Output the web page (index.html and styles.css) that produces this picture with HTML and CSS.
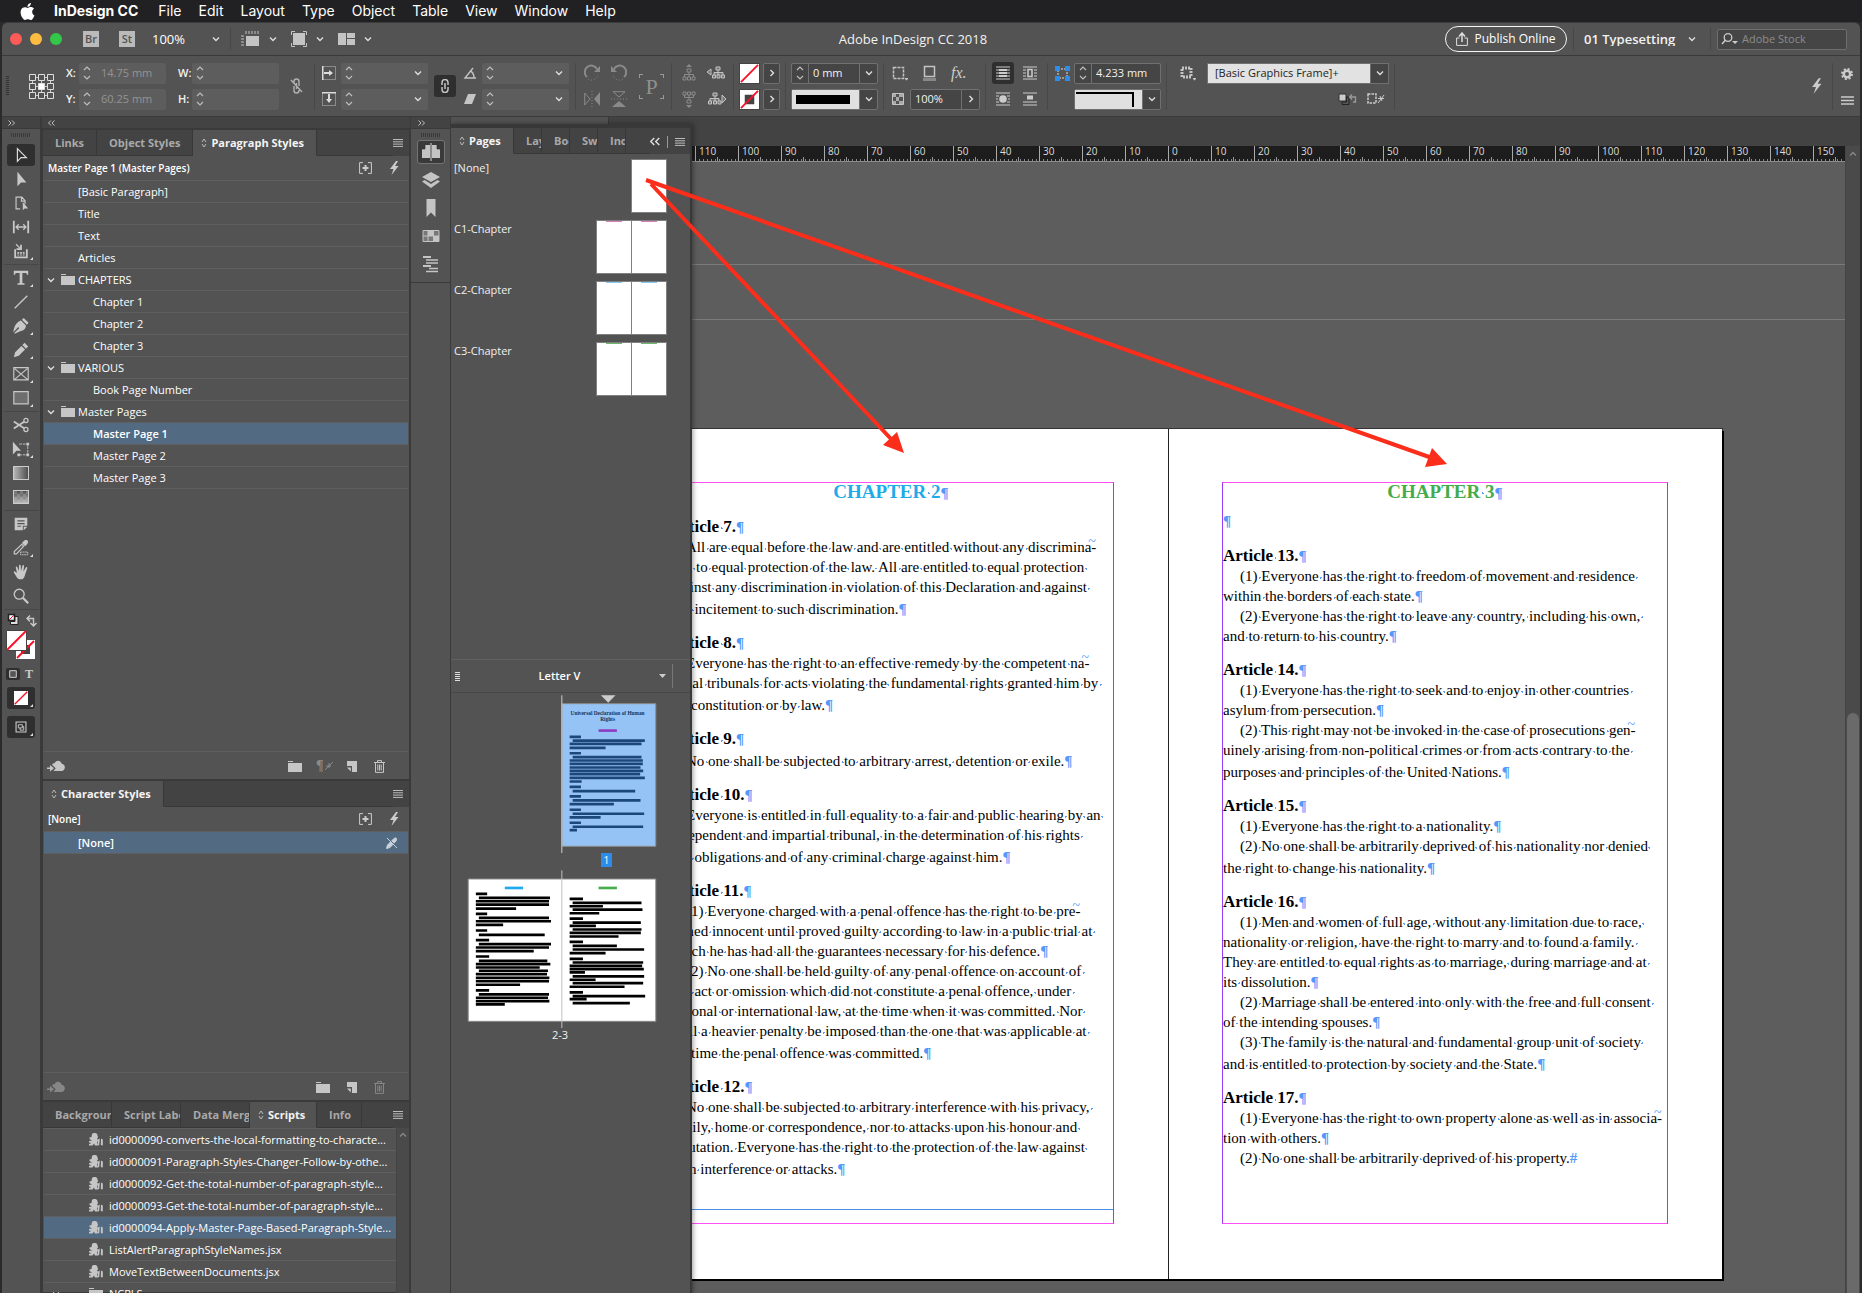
FILE: index.html
```html
<!DOCTYPE html>
<html lang="en">
<head>
<meta charset="utf-8">
<title>Adobe InDesign CC 2018</title>
<link rel="stylesheet" href="styles.css">
</head>
<body>
<svg class="sprite" aria-hidden="true">
  <symbol id="chev" viewBox="0 0 8 8"><path d="M1 2.5l3 3 3-3" fill="none" stroke="currentColor" stroke-width="1.4"/></symbol>
  <symbol id="chev-r" viewBox="0 0 8 8"><path d="M2.5 1l3 3-3 3" fill="none" stroke="currentColor" stroke-width="1.4"/></symbol>
  <symbol id="step" viewBox="0 0 8 16"><path d="M1 5l3-3 3 3M1 11l3 3 3-3" fill="none" stroke="currentColor" stroke-width="1.2"/></symbol>
  <symbol id="updown" viewBox="0 0 6 10"><path d="M1 4l2-3 2 3M1 6l2 3 2-3" fill="none" stroke="currentColor"/></symbol>
  <symbol id="burger" viewBox="0 0 10 8"><path d="M0 .5h10M0 2.8h10M0 5.1h10M0 7.4h10" stroke="currentColor"/></symbol>
  <symbol id="dbl-r" viewBox="0 0 7 6"><path d="M.5 .5L3 3 .5 5.500M4 .5L6.500 3 4 5.500" fill="none" stroke="currentColor"/></symbol>
  <symbol id="dbl-l" viewBox="0 0 7 6"><path d="M3 .5L.5 3 3 5.500M6.500 .5L4 3l2.500 2.500" fill="none" stroke="currentColor"/></symbol>
  <symbol id="grip" viewBox="0 0 20 4"><path d="M.5 0v4M2.500 0v4M4.500 0v4M6.500 0v4M8.500 0v4M10.500 0v4M12.500 0v4M14.500 0v4M16.500 0v4M18.500 0v4" stroke="#3a3a3a"/></symbol>
  <symbol id="folder" viewBox="0 0 14 11"><path d="M0 0h5v1H0zM0 2h14v9H0z" fill="currentColor"/></symbol>
  <symbol id="newitem" viewBox="0 0 10 11"><path d="M0 0h10v11H5V5H0z M0 6.500h3.800V10.500z" fill="currentColor"/></symbol>
  <symbol id="trash" viewBox="0 0 11 13"><path d="M0 2.500h11M3.500 2V.6h4V2M1.500 3v9.400h8V3M3.800 4.500v6M5.500 4.500v6M7.200 4.500v6" fill="none" stroke="currentColor"/></symbol>
  <symbol id="cloud" viewBox="0 0 18 12"><path d="M6.500 11l2.200-2.700L5 4.800C5.500 3.300 7 3 7.600 3.200 8.500 0 13.500-.5 14.700 3.700c4 .3 4.300 6.300.3 7.300z" fill="currentColor"/><path d="M0 7.500h3V5l4 3.300L3 11.600V9H0z" fill="currentColor"/></symbol>
  <symbol id="plusbox" viewBox="0 0 13 12"><path d="M4 .6H.6v10.800H4M9 .6h3.400v10.800H9" fill="none" stroke="currentColor"/><path d="M6.500 3v6M3.500 6h6" stroke="currentColor" stroke-width="2"/></symbol>
  <symbol id="bolt" viewBox="0 0 10 14"><path d="M7 0L1 8h3.500L2.500 14 9.500 5H6L9 0z" fill="currentColor"/></symbol>
  <symbol id="script" viewBox="0 0 14 13"><path d="M3 1c2-2 6-1 5.500 2 1 1 .5 2-.5 2.500 1.500 1 1 3 0 4l1 3H6l-1-2-1.500 2H0V11l2.500-1L0 9.500V8l3-.5L.5 6V4.500L2.500 4z" fill="currentColor"/><path d="M9 6.500l1.800-1-.6 6.500-1.500.5zM12 5.500l1.800 1v6l-2-.5z" fill="currentColor"/></symbol>
  <symbol id="none" viewBox="0 0 20 20"><path d="M0 0h20v20H0z" fill="#fff"/><path d="M1 19L19 1" stroke="#f5132a" stroke-width="2"/></symbol>
  <symbol id="tree" viewBox="0 0 14 18"><path d="M5 5h4v3H5zM1 13h3v3H1zM5.500 13h3v3h-3zM10 13h3v3h-3zM7 8v5M2.500 13v-2.500h9V13" fill="none" stroke="currentColor"/><path d="M4 3l3-3 3 3z" fill="currentColor"/></symbol>
  <symbol id="corner" viewBox="0 0 3 3"><path d="M3 0v3H0z" fill="#ddd"/></symbol>
</svg>

<nav class="menubar" aria-label="Menu bar">
  <svg class="apple" viewBox="0 0 24 24"><path fill="#fff" d="M12.152 6.896c-.948 0-2.415-1.078-3.960-1.040-2.040.027-3.910 1.183-4.961 3.014-2.117 3.675-.546 9.103 1.519 12.090 1.013 1.454 2.208 3.090 3.792 3.039 1.520-.065 2.090-.987 3.935-.987 1.831 0 2.350.987 3.960.948 1.637-.026 2.676-1.480 3.676-2.948 1.156-1.688 1.636-3.325 1.662-3.415-.039-.013-3.182-1.221-3.220-4.857-.026-3.040 2.480-4.494 2.597-4.559-1.429-2.090-3.623-2.324-4.390-2.376-2-.156-3.675 1.090-4.610 1.090zM15.530 3.830c.843-1.012 1.400-2.427 1.245-3.830-1.207.052-2.662.805-3.532 1.818-.780.896-1.454 2.338-1.273 3.714 1.338.104 2.715-.688 3.559-1.701"/></svg>
  <button class="appname">InDesign CC</button><button>File</button><button>Edit</button><button>Layout</button><button>Type</button><button>Object</button><button>Table</button><button>View</button><button>Window</button><button>Help</button>
</nav>

<div class="app">
  <header class="appbar">
    <div class="lights"><i class="red"></i><i class="amber"></i><i class="go"></i></div>
    <button class="chip">Br</button><button class="chip">St</button>
    <label class="pick zoom"><select aria-label="Zoom level"><option>100%</option></select><svg class="c8"><use href="#chev"/></svg></label>
    <i class="vline"></i>
    <button class="tool2" aria-label="View options"><svg width="19" height="16" viewBox="0 0 19 16"><path d="M5 0v3M8 0v3M11 0v3M14 0v3M17 0v3M0 5h3M0 8h3M0 11h3M0 14h3" stroke="#c4c4c4"/><path d="M5 5h13v10H5z" fill="#c4c4c4"/></svg><svg class="c8"><use href="#chev"/></svg></button>
    <button class="tool2" aria-label="Screen mode"><svg width="16" height="16" viewBox="0 0 16 16"><path d="M2 2h12v12H2z" fill="#c4c4c4"/><path d="M.5 4V.5H4M12 .5h3.500V4M.5 12v3.500H4M12 15.500h3.500V12" fill="none" stroke="#c4c4c4"/></svg><svg class="c8"><use href="#chev"/></svg></button>
    <button class="tool2" aria-label="Arrange documents"><svg width="17" height="12" viewBox="0 0 17 12"><path d="M0 0h8v12H0zM9 0h8v5H9zM9 6h8v6H9z" fill="#c4c4c4"/></svg><svg class="c8"><use href="#chev"/></svg></button>
    <h1>Adobe InDesign CC 2018</h1>
    <button class="publish"><svg width="12" height="14" viewBox="0 0 12 14"><path d="M3.500 6H.6v7.400h10.800V6H8.500" fill="none" stroke="#ddd"/><path d="M6 10V2M3 4.500l3-3.500 3 3.500" fill="none" stroke="#ddd" stroke-width="1.500"/></svg>Publish Online</button>
    <i class="vline"></i>
    <label class="pick space"><select aria-label="Workspace"><option>01 Typesetting</option></select><svg class="c8"><use href="#chev"/></svg></label>
    <i class="vline"></i>
    <label class="search"><svg width="17" height="12" viewBox="0 0 17 12"><circle cx="7" cy="4.500" r="3.800" fill="none" stroke="#ccc" stroke-width="1.300"/><path d="M4.500 7L1 11" stroke="#ccc" stroke-width="1.500"/><path d="M11 8h6l-3 3z" fill="#ccc"/></svg><input type="search" placeholder="Adobe Stock" aria-label="Adobe Stock"></label>
  </header>

  <section class="control" aria-label="Control">
    <svg class="vgrip" width="3" height="20" viewBox="0 0 3 20"><path d="M0 .5h3M0 2.500h3M0 4.500h3M0 6.500h3M0 8.500h3M0 10.500h3M0 12.500h3M0 14.500h3M0 16.500h3M0 18.500h3" stroke="#333"/></svg>
    <svg class="refpt" width="25" height="25" viewBox="0 0 25 25"><path d="M3.500 3.500h18v18h-18zM3.500 12.500h18M12.500 3.500v18" fill="none" stroke="#ccc"/><g fill="#535353" stroke="#ddd"><path d="M.5.5h6v6h-6zM9.500.5h6v6h-6zM18.500.5h6v6h-6zM.5 9.500h6v6h-6zM18.500 9.500h6v6h-6zM.5 18.500h6v6h-6zM9.500 18.500h6v6h-6zM18.500 18.500h6v6h-6z"/><path d="M9.500 9.500h6v6h-6z" fill="#fff"/></g></svg>
    <div class="coords">
      <label for="fx">X:</label><span class="field off"><svg class="st"><use href="#step"/></svg><input id="fx" value="14.75 mm"></span>
      <label for="fw">W:</label><span class="field off"><svg class="st"><use href="#step"/></svg><input id="fw"></span>
      <label for="fy">Y:</label><span class="field off"><svg class="st"><use href="#step"/></svg><input id="fy" value="60.25 mm"></span>
      <label for="fh">H:</label><span class="field off"><svg class="st"><use href="#step"/></svg><input id="fh"></span>
    </div>
    <svg class="unlink" width="13" height="16" viewBox="0 0 13 16"><path d="M4 6V3.500a2.500 2.500 0 0 1 5 0V8M4 8v4.500a2.500 2.500 0 0 0 5 0V10M6.500 5v6M1 2l11 12" fill="none" stroke="#b0b0b0" stroke-width="1.400"/></svg>
    <i class="sep"></i>
    <div class="scale">
      <svg width="14" height="14" viewBox="0 0 14 14"><path d="M.5.5h13v13H.5z" fill="none" stroke="#c4c4c4" stroke-dasharray="1 1"/><path d="M.5 0v14M2 7h6" stroke="#ddd" stroke-width="2"/><path d="M7 4l4 3-4 3z" fill="#ddd"/></svg>
      <label class="field off"><svg class="st"><use href="#step"/></svg><input aria-label="Scale X"><svg class="c8"><use href="#chev"/></svg></label>
      <svg width="14" height="14" viewBox="0 0 14 14"><path d="M.5.5h13v13H.5z" fill="none" stroke="#c4c4c4" stroke-dasharray="1 1"/><path d="M0 .5h14M7 2v6" stroke="#ddd" stroke-width="2"/><path d="M4 7l3 4 3-4z" fill="#ddd"/></svg>
      <label class="field off"><svg class="st"><use href="#step"/></svg><input aria-label="Scale Y"><svg class="c8"><use href="#chev"/></svg></label>
    </div>
    <button class="linkbtn" aria-label="Constrain proportions"><svg width="8" height="14" viewBox="0 0 8 14"><path d="M1 6V3.500a3 3 0 0 1 6 0V6M1 8v2.500a3 3 0 0 0 6 0V8M4 4v6" fill="none" stroke="#c4c4c4" stroke-width="1.500"/></svg></button>
    <div class="scale">
      <svg width="14" height="12" viewBox="0 0 14 12"><path d="M10 1L2 11h11M7 4c3 1 4 3 4 7" fill="none" stroke="#c4c4c4" stroke-width="1.400"/></svg>
      <label class="field off"><svg class="st"><use href="#step"/></svg><input aria-label="Rotation"><svg class="c8"><use href="#chev"/></svg></label>
      <svg width="14" height="10" viewBox="0 0 14 10"><path d="M5 0h8L9 10H1z" fill="#c4c4c4"/></svg>
      <label class="field off"><svg class="st"><use href="#step"/></svg><input aria-label="Shear"><svg class="c8"><use href="#chev"/></svg></label>
    </div>
    <i class="sep"></i>
    <div class="icons rot">
      <svg viewBox="0 0 16 16"><path d="M3 12A6.500 6.500 0 1 1 13 4" fill="none" stroke="#8a8a8a" stroke-width="2"/><path d="M16 1v6h-6z" fill="#8a8a8a"/><path d="M4 14a6.500 6.500 0 0 0 10-4" fill="none" stroke="#8a8a8a" stroke-dasharray="1 2"/></svg>
      <svg viewBox="0 0 16 16"><path d="M13 12A6.500 6.500 0 1 0 3 4" fill="none" stroke="#8a8a8a" stroke-width="2"/><path d="M0 1v6h6z" fill="#8a8a8a"/><path d="M12 14a6.500 6.500 0 0 1-10-4" fill="none" stroke="#8a8a8a" stroke-dasharray="1 2"/></svg>
      <svg viewBox="0 0 16 16"><path d="M.7 2v12L6 8z" fill="none" stroke="#8a8a8a"/><path d="M16 1v14l-6-7z" fill="#8a8a8a"/><path d="M8 0v16" stroke="#8a8a8a" stroke-dasharray="1 2"/></svg>
      <svg viewBox="0 0 16 16"><path d="M2 .7h12L8 6z" fill="none" stroke="#8a8a8a"/><path d="M1 16h14l-7-6z" fill="#8a8a8a"/><path d="M0 8h16" stroke="#8a8a8a" stroke-dasharray="1 2"/></svg>
    </div>
    <div class="bigp">P</div>
    <i class="sep"></i>
    <div class="icons hier">
      <svg class="dim"><use href="#tree"/></svg><svg viewBox="0 0 19 18"><path d="M0 8l4-3v6zM9 3h4v3H9zM5.500 11h3v3h-3zM10 11h3v3h-3zM14.500 11h3v3h-3zM11 6v5M7 11V8.500h9V11" fill="#c4c4c4" stroke="#c4c4c4" fill-opacity=".3"/></svg>
      <svg class="dim flip"><use href="#tree"/></svg><svg viewBox="0 0 19 18"><path d="M19 9l-4-4v8zM6 3h4v3H6zM1.500 11h3v3h-3zM6.500 11h3v3h-3zM11 11h3v3h-3zM8 6v5M3 11V8.500h9V11" fill="#c4c4c4" stroke="#c4c4c4" fill-opacity=".3"/></svg>
    </div>
    <i class="sep"></i>
    <div class="fills">
      <svg class="sw"><use href="#none"/></svg><button class="box" aria-label="Fill options"><svg class="c8"><use href="#chev-r"/></svg></button>
      <svg class="sw" viewBox="0 0 20 20"><path d="M0 0h20v20H0z" fill="#fff"/><path d="M5 5h10v10H5z" fill="#444"/><path d="M1 19L19 1" stroke="#f5132a" stroke-width="2"/></svg><button class="box" aria-label="Stroke options"><svg class="c8"><use href="#chev-r"/></svg></button>
    </div>
    <i class="sep"></i>
    <div class="stack">
      <span class="field on"><svg class="st"><use href="#step"/></svg><input class="bl" value="0 mm" aria-label="Stroke weight"><button class="dd" aria-label="Stroke weights"><svg class="c8"><use href="#chev"/></svg></button></span>
      <span class="field on"><i class="stroke"></i><button class="dd" aria-label="Stroke types"><svg class="c8"><use href="#chev"/></svg></button></span>
    </div>
    <i class="sep"></i>
    <div class="stack effects">
      <div class="row3">
        <svg width="16" height="15" viewBox="0 0 16 15"><path d="M1.500 1.500h10v11h-10z" fill="none" stroke="#c4c4c4" stroke-width="1.500" stroke-dasharray="3 1"/><path d="M13 12h3v1l-1.500 1.500L13 13z" fill="#c4c4c4"/></svg>
        <svg width="15" height="17" viewBox="0 0 15 17"><path d="M2.500 1.500h10v10h-10z" fill="none" stroke="#c4c4c4" stroke-width="1.500"/><path d="M1 13h13v3H1z" fill="#888"/></svg>
        <span class="fx">fx.</span>
      </div>
      <div class="row2">
        <svg width="12" height="12" viewBox="0 0 12 12"><path d="M.5.5h11v11H.5z" fill="none" stroke="#c4c4c4"/><path d="M1 1h3v3H1zM7 1h4v3H7zM4 4h3v4H4zM1 8h3v3H1zM7 8h4v3H7z" fill="#aaa"/></svg>
        <span class="field on"><input value="100%" aria-label="Opacity"><button class="dd" aria-label="Opacity slider"><svg class="c8"><use href="#chev-r"/></svg></button></span>
      </div>
    </div>
    <i class="sep"></i>
    <div class="wraps">
      <button class="active" aria-label="No text wrap"><svg viewBox="0 0 14 14"><path d="M0 1h14M0 4h14M0 7h14M0 10h14M0 13h14" stroke="#ccc"/><path d="M3 3h8v8H3z" fill="#ccc"/><path d="M3 5.500h8M3 8.500h8" stroke="#333"/></svg></button>
      <button aria-label="Wrap around bounding box"><svg viewBox="0 0 14 14"><path d="M0 1h14M0 4h3M11 4h3M0 7h3M11 7h3M0 10h3M11 10h3M0 13h14" stroke="#ccc"/><path d="M5 3.500h4v7H5z" fill="none" stroke="#ccc" stroke-width="1.500"/></svg></button>
      <button aria-label="Wrap around object shape"><svg viewBox="0 0 14 14"><path d="M0 1h14M0 4h3M11 4h3M0 7h2M12 7h2M0 10h3M11 10h3M0 13h14" stroke="#ccc"/><circle cx="7" cy="7" r="3.800" fill="#ccc"/></svg></button>
      <button aria-label="Jump object"><svg viewBox="0 0 14 14"><path d="M0 1h14M0 10h14M0 13h14" stroke="#ccc"/><path d="M4 3.500h6v4H4z" fill="#ccc"/></svg></button>
    </div>
    <i class="sep"></i>
    <div class="scale corners">
      <svg width="15" height="15" viewBox="0 0 15 15"><path d="M3 3h9v9H3z" fill="none" stroke="#999" stroke-dasharray="2 1" stroke-width="2"/><path d="M0 0h5v5H0zM10 0h5v5h-5zM0 10h5v5H0zM10 10h5v5h-5z" fill="#2e8ceb"/></svg>
      <span class="field on"><svg class="st"><use href="#step"/></svg><input class="bl" value="4.233 mm" aria-label="Corner size"></span>
      <i></i>
      <span class="field on"><i class="cshape"></i><button class="dd" aria-label="Corner shape"><svg class="c8"><use href="#chev"/></svg></button></span>
    </div>
    <i class="sep"></i>
    <div class="objstyle">
      <svg width="16" height="15" viewBox="0 0 16 15"><path d="M2 2h9v9H2z" fill="none" stroke="#c4c4c4" stroke-width="3" stroke-dasharray="2 1"/><path d="M13 12h3v1l-1.500 1.500L13 13z" fill="#c4c4c4"/></svg>
      <label class="pick light"><select aria-label="Object style"><option>[Basic Graphics Frame]+</option></select><b class="dd"><svg class="c8"><use href="#chev"/></svg></b></label>
      <i></i>
      <span class="mini">
        <svg width="20" height="12" viewBox="0 0 20 12"><path d="M1 1h7v7H1z" fill="#ccc" stroke="#333"/><path d="M8.500 4v5H4v2.500h7V4z" fill="#555" stroke="#222"/><path d="M12 4h5.500v5H15M14 1.500L11.500 4 14 6.500" fill="none" stroke="#999" stroke-width="1.300"/></svg>
        <svg width="18" height="12" viewBox="0 0 18 12"><path d="M1 1h8v9H1z" fill="none" stroke="#ccc" stroke-width="1.500" stroke-dasharray="2.500 1"/><path d="M11 10l6-8M11 5.500h6M13 3l2 5" stroke="#ccc"/></svg>
      </span>
    </div>
    <i class="sep"></i>
    <span class="grow"></span>
    <svg class="bolt" width="11" height="16"><use href="#bolt"/></svg>
    <i class="sep"></i>
    <div class="stack far">
      <svg width="12" height="12" viewBox="0 0 12 12"><circle cx="6" cy="6" r="3.200" fill="none" stroke="#ccc" stroke-width="2.500"/><circle cx="6" cy="6" r="5" fill="none" stroke="#ccc" stroke-width="2" stroke-dasharray="2 1.930"/></svg>
      <svg width="13" height="9" viewBox="0 0 13 9"><path d="M0 1h13M0 4.500h13M0 8h13" stroke="#ccc" stroke-width="1.300"/></svg>
    </div>
  </section>

  <main class="work">
    <aside class="toolcol">
      <div class="strip"><svg class="dbl"><use href="#dbl-r"/></svg></div>
      <div class="tools">
        <svg class="grip"><use href="#grip"/></svg>
        <button class="on" aria-label="Selection"><svg viewBox="0 0 20 20"><path d="M6 3v14l4-4h6z" fill="none" stroke="#ddd" stroke-width="1.300"/></svg></button>
        <button aria-label="Direct Selection"><svg viewBox="0 0 20 20"><path d="M6 2v16l4-4h6z" fill="#c8c8c8"/></svg></button>
        <button aria-label="Page"><svg viewBox="0 0 20 20"><path d="M9 16.500H4.500v-13H11l3.500 4V11M10.500 4v4h4" fill="none" stroke="#c8c8c8" stroke-width="1.300"/><path d="M12 9v9l2-2h4z" fill="#c8c8c8"/></svg></button>
        <button aria-label="Gap"><svg viewBox="0 0 20 20"><path d="M2 3v14M18 3v14" stroke="#c8c8c8" stroke-width="2"/><path d="M5 10h10M7.500 7l-3 3 3 3M12.500 7l3 3-3 3" fill="none" stroke="#c8c8c8" stroke-width="1.400"/></svg></button>
        <button aria-label="Content Collector"><svg viewBox="0 0 20 20"><path d="M3.500 8v9h13V8" fill="none" stroke="#c8c8c8" stroke-width="2"/><path d="M6 11h2v2H6zM9 11h2v2H9zM12 11h2v2h-2zM6 14h2v1H6zM9 14h2v1H9zM12 14h2v1h-2zM5 2l4 4V3h2v6H5V7h3L4 3z" fill="#c8c8c8"/></svg><svg class="cn"><use href="#corner"/></svg></button>
        <hr>
        <button aria-label="Type"><svg viewBox="0 0 20 20"><path d="M2 2h16v4.500h-1.500L16 4.500h-4.500v11l2.500.5v1.500H6V16l2.500-.5v-11H4l-.5 2H2z" fill="#c8c8c8"/></svg><svg class="cn"><use href="#corner"/></svg></button>
        <button aria-label="Line"><svg viewBox="0 0 20 20"><path d="M3 17L17 3" stroke="#c8c8c8" stroke-width="1.500"/></svg></button>
        <button aria-label="Pen"><svg viewBox="0 0 20 20"><path d="M13 1l5.500 5.500-2 2L11 3zM10 4l5.500 5.500c0 4-3 6-7 6.500L3 18.500l-.5-.8L8 12.500 7 11l-5.500 6C2 12 4 6 10 4z" fill="#c8c8c8"/></svg><svg class="cn"><use href="#corner"/></svg></button>
        <button aria-label="Pencil"><svg viewBox="0 0 20 20"><path d="M14 2l4 4-2.500 2.500-4-4zM10.500 5.500l4 4-7 7L2 18l1.500-5.500z" fill="#c8c8c8"/></svg><svg class="cn"><use href="#corner"/></svg></button>
        <button aria-label="Rectangle Frame"><svg viewBox="0 0 20 20"><path d="M2 3h16v13.500H2zM3 4l14 12M17 4L3 16" fill="none" stroke="#c8c8c8" stroke-width="1.300"/></svg><svg class="cn"><use href="#corner"/></svg></button>
        <button aria-label="Rectangle"><svg viewBox="0 0 20 20"><path d="M2 3h16v13.500H2z" fill="#6e6e6e" stroke="#c8c8c8" stroke-width="1.300"/></svg><svg class="cn"><use href="#corner"/></svg></button>
        <hr>
        <button aria-label="Scissors"><svg viewBox="0 0 20 20"><circle cx="15.500" cy="5" r="2.300" fill="none" stroke="#c8c8c8" stroke-width="1.400"/><circle cx="15.500" cy="15" r="2.300" fill="none" stroke="#c8c8c8" stroke-width="1.400"/><path d="M2 6l11.500 7.500M2 14L13.500 6.500" stroke="#c8c8c8" stroke-width="2"/></svg></button>
        <button aria-label="Free Transform"><svg viewBox="0 0 20 20"><path d="M8 4.500h9.500v12h-10" fill="none" stroke="#c8c8c8" stroke-dasharray="3 1"/><path d="M1 2v14l4-4h5z" fill="#c8c8c8"/><path d="M16 3h3v3h-3zM16 15h3v3h-3zM6 15h3v3H6z" fill="#c8c8c8"/></svg><svg class="cn"><use href="#corner"/></svg></button>
        <button aria-label="Gradient Swatch"><i class="grad"></i></button>
        <button aria-label="Gradient Feather"><i class="grad feather"></i></button>
        <hr>
        <button aria-label="Note"><svg viewBox="0 0 20 20"><path d="M3 3h14v9h-5v5H3zM13 17v-4h4z" fill="#c8c8c8"/><path d="M6 6.500h8M6 9.500h8M6 12.500h4" stroke="#535353" stroke-width="1.300"/></svg></button>
        <button aria-label="Eyedropper"><svg viewBox="0 0 20 20"><path d="M14 1.500c3-1 5 1 3 4L14.500 8 11 4.500z" fill="#c8c8c8"/><path d="M11 6l2 2-8 8.500H2.500V14z" fill="none" stroke="#c8c8c8" stroke-width="1.300"/><path d="M9.500 14.500h8v3h-8z" fill="none" stroke="#c8c8c8" stroke-dasharray="2 .6"/></svg><svg class="cn"><use href="#corner"/></svg></button>
        <button aria-label="Hand"><svg viewBox="0 0 20 20"><path d="M6 17L2 10.500c0-1.500 1-1.500 2-.5l1.500 1.200L4.200 5c0-1.500 1.500-1.500 1.800-.2L7.500 9 7.800 3c0-1.500 1.800-1.500 2 0L10 9l1.600-6c.4-1.300 2-.9 1.800.4L12.700 9.500l2.500-4.300c.7-1.200 2.200-.5 1.700.8L14.500 13c-.5 2.500-1.500 4-3 5H8z" fill="#c8c8c8"/></svg></button>
        <button aria-label="Zoom"><svg viewBox="0 0 20 20"><circle cx="8" cy="8" r="5.500" fill="none" stroke="#c8c8c8" stroke-width="1.500"/><path d="M12 12l6 6" stroke="#c8c8c8" stroke-width="2.500"/></svg></button>
        <hr>
        <svg class="fillstroke" viewBox="0 0 38 52"><path d="M6.500 3.500h6v6h-6z" fill="#fff" stroke="#222" stroke-width="1.500"/><path d="M7 9l5-5" stroke="#f5132a"/><path d="M13 5.500h3v8H8.500v-3H13z" fill="#ddd" stroke="#222"/><path d="M25 7.500h6.500V14M28 4.500l-3 3 3 3M28.500 12l3 3 3-3" fill="none" stroke="#c8c8c8" stroke-width="1.400"/><path d="M14 29h19v19H14z" fill="#fff"/><path d="M19 34h9v9h-9z" fill="#444"/><path d="M15 47l17-17" stroke="#f5132a" stroke-width="2"/><path d="M4.500 19.500h20v20h-20z" fill="#fff" stroke="#444"/><path d="M5 39l19-19" stroke="#f5132a" stroke-width="2"/></svg>
        <div class="fmt"><button class="on" aria-label="Formatting affects container"><svg viewBox="0 0 8 8"><path d="M.7.7h6.600v6.600H.7z" fill="#555" stroke="#ccc"/></svg></button><button>T</button></div>
        <button class="on gap" aria-label="Apply None"><svg class="nn"><use href="#none"/></svg><svg class="cn"><use href="#corner"/></svg></button>
        <button class="on gap" aria-label="Preview mode"><svg viewBox="0 0 20 20"><path d="M4.500 4.500h11v11h-11z" fill="none" stroke="#ccc" stroke-width="1.200"/><path d="M7 7.500h4.500v3.500H7zM9 11v2.500h4v-4h-1.500" fill="none" stroke="#ccc"/></svg><svg class="cn"><use href="#corner"/></svg></button>
      </div>
    </aside>

    <aside class="dock">
      <div class="strip"><svg class="dbl"><use href="#dbl-l"/></svg></div>
      <div class="panels">
        <section class="panel">
          <div class="tabs"><button>Links</button><button>Object Styles</button><button class="cur"><svg class="ud"><use href="#updown"/></svg>Paragraph Styles</button><span class="grow"></span><svg class="bg"><use href="#burger"/></svg></div>
          <div class="head"><span class="grow">Master Page 1 (Master Pages)</span><svg class="pb"><use href="#plusbox"/></svg><svg class="bt"><use href="#bolt"/></svg></div>
          <ul class="list">
            <li class="l1">[Basic Paragraph]</li><li class="l1">Title</li><li class="l1">Text</li><li class="l1">Articles</li>
            <li class="set"><svg class="c8"><use href="#chev"/></svg><svg class="fo"><use href="#folder"/></svg>CHAPTERS</li>
            <li class="l2">Chapter 1</li><li class="l2">Chapter 2</li><li class="l2">Chapter 3</li>
            <li class="set"><svg class="c8"><use href="#chev"/></svg><svg class="fo"><use href="#folder"/></svg>VARIOUS</li>
            <li class="l2">Book Page Number</li>
            <li class="set"><svg class="c8"><use href="#chev"/></svg><svg class="fo"><use href="#folder"/></svg>Master Pages</li>
            <li class="l2 sel">Master Page 1</li><li class="l2">Master Page 2</li><li class="l2">Master Page 3</li>
          </ul>
          <div class="foot"><svg class="cl"><use href="#cloud"/></svg><span class="grow"></span><svg class="fo"><use href="#folder"/></svg><span class="clr">¶<svg width="8" height="8" viewBox="0 0 8 8"><path d="M0 8l8-8M1 4h5M4 1v5" stroke="currentColor"/></svg></span><svg class="ni"><use href="#newitem"/></svg><svg class="tr"><use href="#trash"/></svg></div>
        </section>
        <section class="panel">
          <div class="tabs"><button class="cur"><svg class="ud"><use href="#updown"/></svg>Character Styles</button><span class="grow"></span><svg class="bg"><use href="#burger"/></svg></div>
          <div class="head"><span class="grow">[None]</span><svg class="pb"><use href="#plusbox"/></svg><svg class="bt"><use href="#bolt"/></svg></div>
          <ul class="list"><li class="l1 sel"><span class="grow">[None]</span><svg class="nopen" viewBox="0 0 12 12"><path d="M8 1.500c2-1.500 3.500 0 2 2.500L4 10.500l-3.500 1L1.500 8zM1 1l10 10" fill="#c9d2dc" stroke="#c9d2dc"/><path d="M2 1l9 9" stroke="#526a82"/></svg></li></ul>
          <div class="foot"><svg class="cl dim"><use href="#cloud"/></svg><span class="grow"></span><svg class="fo"><use href="#folder"/></svg><svg class="ni"><use href="#newitem"/></svg><svg class="tr dim"><use href="#trash"/></svg></div>
        </section>
        <section class="panel">
          <div class="tabs even"><button>Background</button><button>Script Label</button><button>Data Merge</button><button class="cur"><svg class="ud"><use href="#updown"/></svg>Scripts</button><button class="info">Info</button><span class="grow"></span><svg class="bg"><use href="#burger"/></svg></div>
          <div class="scroller">
            <ul class="list files">
              <li><svg class="sc"><use href="#script"/></svg><span>id0000090-converts-the-local-formatting-to-characte...</span></li>
              <li><svg class="sc"><use href="#script"/></svg><span>id0000091-Paragraph-Styles-Changer-Follow-by-othe...</span></li>
              <li><svg class="sc"><use href="#script"/></svg><span>id0000092-Get-the-total-number-of-paragraph-style...</span></li>
              <li><svg class="sc"><use href="#script"/></svg><span>id0000093-Get-the-total-number-of-paragraph-style...</span></li>
              <li class="sel"><svg class="sc"><use href="#script"/></svg><span>id0000094-Apply-Master-Page-Based-Paragraph-Style...</span></li>
              <li><svg class="sc"><use href="#script"/></svg><span>ListAlertParagraphStyleNames.jsx</span></li>
              <li><svg class="sc"><use href="#script"/></svg><span>MoveTextBetweenDocuments.jsx</span></li>
              <li class="dir"><svg class="c8"><use href="#chev"/></svg><svg class="fo"><use href="#folder"/></svg><span>NCPLS</span></li>
            </ul>
            <div class="bar"><svg class="c8 up"><use href="#chev"/></svg></div>
          </div>
        </section>
      </div>
    </aside>

    <aside class="icondock">
      <div class="strip"><svg class="dbl"><use href="#dbl-r"/></svg></div>
      <div class="iconset">
        <svg class="grip"><use href="#grip"/></svg>
        <button class="on" aria-label="Pages"><svg viewBox="0 0 18 18"><path d="M0 6h3V2h5v13H0zM10 2h5v4h3v9h-8z" fill="#c4c4c4"/><path d="M9 0v18" stroke="#ddd"/><path d="M3 2v4H0M15 2v4h3" fill="none" stroke="#333" stroke-width=".7"/></svg></button>
        <button aria-label="Layers"><svg viewBox="0 0 18 18"><path d="M9 1l9 5-9 5-9-5z" fill="#c4c4c4"/><path d="M0 10.500l2.500-1.500L9 13l6.500-4 2.500 1.500L9 17z" fill="#c4c4c4"/></svg></button>
        <button aria-label="Bookmarks"><svg viewBox="0 0 18 18"><path d="M4.500 0h9v18L9 13.500 4.500 18z" fill="#c4c4c4"/></svg></button>
        <button aria-label="Swatches"><svg viewBox="0 0 18 18"><path d="M1 3.500h16v11H1z" fill="#777" stroke="#c4c4c4"/><path d="M6 4h5v5H6zM12 9h5v5h-5z" fill="#c4c4c4"/><path d="M6 3v11M11.500 3v11M1 9h16" stroke="#c4c4c4"/></svg></button>
        <button aria-label="Index"><svg viewBox="0 0 18 18"><path d="M1 2h8M1 11h8" stroke="#c4c4c4" stroke-width="2"/><path d="M4 5h12M4 8h12M7 13.500h9M4 16.500h12" stroke="#c4c4c4" stroke-width="1.300"/></svg></button>
      </div>
      <div class="rest"></div>
    </aside>

    <section class="doc">
      <div class="doctabs"><i></i></div>
      <ol class="ruler"><li>110</li><li>100</li><li>90</li><li>80</li><li>70</li><li>60</li><li>50</li><li>40</li><li>30</li><li>20</li><li>10</li><li>0</li><li>10</li><li>20</li><li>30</li><li>40</li><li>50</li><li>60</li><li>70</li><li>80</li><li>90</li><li>100</li><li>110</li><li>120</li><li>130</li><li>140</li><li>150</li></ol>
      <div class="pasteboard">
        <div class="spread">
          <article class="page left"><div class="frame">
<h2 class="ch2">CHAPTER 2¶</h2>
<section><h3>Article 7.¶</h3><p>All are equal before the law and are entitled without any discrimina-
tion to equal protection of the law. All are entitled to equal protection
against any discrimination in violation of this Declaration and against
<span class="end">any incitement to such discrimination.¶</span></p></section>
<section><h3>Article 8.¶</h3><p>Everyone has the right to an effective remedy by the competent na-
tional tribunals for acts violating the fundamental rights granted him by
<span class="end">the constitution or by law.¶</span></p></section>
<section><h3>Article 9.¶</h3><p class="single">No one shall be subjected to arbitrary arrest, detention or exile.¶</p></section>
<section><h3>Article 10.¶</h3><p>Everyone is entitled in full equality to a fair and public hearing by an
independent and impartial tribunal, in the determination of his rights
<span class="end">and obligations and of any criminal charge against him.¶</span></p></section>
<section><h3>Article 11.¶</h3><p>(1) Everyone charged with a penal offence has the right to be pre-
sumed innocent until proved guilty according to law in a public trial at
which he has had all the guarantees necessary for his defence.¶</p><p>(2) No one shall be held guilty of any penal offence on account of
any act or omission which did not constitute a penal offence, under
national or international law, at the time when it was committed. Nor
shall a heavier penalty be imposed than the one that was applicable at
<span class="end">the time the penal offence was committed.¶</span></p></section>
<section><h3>Article 12.¶</h3><p>No one shall be subjected to arbitrary interference with his privacy,
family, home or correspondence, nor to attacks upon his honour and
reputation. Everyone has the right to the protection of the law against
<span class="end">such interference or attacks.¶</span></p></section>
          </div></article>
          <article class="page right"><div class="frame">
<h2 class="ch3">CHAPTER 3¶</h2>
<div class="blank">¶</div>
<section><h3>Article 13.¶</h3><p>(1) Everyone has the right to freedom of movement and residence
within the borders of each state.¶</p><p>(2) Everyone has the right to leave any country, including his own,
and to return to his country.¶</p></section>
<section><h3>Article 14.¶</h3><p>(1) Everyone has the right to seek and to enjoy in other countries
asylum from persecution.¶</p><p>(2) This right may not be invoked in the case of prosecutions gen-
uinely arising from non-political crimes or from acts contrary to the
<span class="end">purposes and principles of the United Nations.¶</span></p></section>
<section><h3>Article 15.¶</h3><p>(1) Everyone has the right to a nationality.¶</p><p>(2) No one shall be arbitrarily deprived of his nationality nor denied
<span class="end">the right to change his nationality.¶</span></p></section>
<section><h3>Article 16.¶</h3><p>(1) Men and women of full age, without any limitation due to race,
nationality or religion, have the right to marry and to found a family.
They are entitled to equal rights as to marriage, during marriage and at
its dissolution.¶</p><p>(2) Marriage shall be entered into only with the free and full consent
of the intending spouses.¶</p><p>(3) The family is the natural and fundamental group unit of society
<span class="end">and is entitled to protection by society and the State.¶</span></p></section>
<section><h3>Article 17.¶</h3><p>(1) Everyone has the right to own property alone as well as in associa-
tion with others.¶</p><p>(2) No one shall be arbitrarily deprived of his property.#</p></section>
          </div></article>
        </div>
      </div>
      <div class="vscroll"><svg class="c8 up"><use href="#chev"/></svg><i></i></div>

      <div class="flyout">
        <div class="tabs pg"><button class="cur"><svg class="ud"><use href="#updown"/></svg>Pages</button><button>Layers</button><button>Bookmarks</button><button>Swatches</button><button>Index</button><span class="grow"></span><svg class="dblb"><use href="#dbl-l"/></svg><i class="vb"></i><svg class="bg"><use href="#burger"/></svg></div>
        <ul class="masters">
          <li>[None]<span class="th"><i></i></span></li>
          <li>C1-Chapter<span class="th pink"><i></i><i></i></span></li>
          <li>C2-Chapter<span class="th blue"><i></i><i></i></span></li>
          <li>C3-Chapter<span class="th lime"><i></i><i></i></span></li>
        </ul>
        <div class="size"><svg width="5" height="9" viewBox="0 0 5 9"><path d="M0 .5h5M0 2.500h5M0 4.500h5M0 6.500h5M0 8.500h5" stroke="#ddd"/></svg><label class="pick"><select aria-label="Page size"><option>Letter V</option></select></label><svg width="7" height="4" viewBox="0 0 7 4"><path d="M0 0h7L3.500 4z" fill="#ccc"/></svg><i class="vb"></i></div>
        <div class="spreads">
          <svg viewBox="80 134 570 475" width="190" height="158">
            <path d="M482 135h44l-22 22z" fill="#ccc"/>
            <path d="M365 160h282v429H365z" fill="#96c3f5" stroke="#8a8a8a" stroke-width="3"/>
            <path d="M364.500 135v474" stroke="#d0d0d0" stroke-width="3"/>
            <text x="502" y="194" class="tt">Universal Declaration of Human</text><text x="502" y="212" class="tt">Rights</text>
            <path d="M475 241h55" stroke="#8b3fc0" stroke-width="8"/>
            <path d="M388 260h34M397 271h217M388 281h216M388 293h108M388 309h34M397 321h207M388 331h220M388 341h220M388 352h213M388 362h221M388 372h212M388 383h226M388 394h36M388 410h34M397 423h188M388 439h34M397 451h204M388 462h133M388 479h34M397 491h215M388 502h93M388 518h34M397 530h212M388 540h22" stroke="#1b477a" stroke-width="8"/>
          </svg>
          <b class="num">1</b>
          <svg viewBox="80 659 570 475" width="190" height="158">
            <path d="M83 686h564v428H83z" fill="#fff" stroke="#8a8a8a" stroke-width="3"/>
            <path d="M364.500 660v474" stroke="#c0c0c0" stroke-width="3"/>
            <path d="M193 713h55" stroke="#1eaaf1" stroke-width="8"/><path d="M475 713h55" stroke="#45ad4c" stroke-width="8"/>
            <path d="M106 731h34M115 743h214M106 753h220M106 763h220M106 775h121M106 791h34M115 803h211M106 813h226M106 824h82M106 841h34M115 854h198M106 870h40M115 882h217M106 892h220M106 903h174M106 919h40M115 932h206M106 942h224M106 952h192M115 962h208M106 972h214M106 983h221M106 993h220M106 1004h133M106 1021h40M115 1033h211M106 1043h217M106 1053h221M106 1063h87M388 746h40M397 758h207M388 768h100M397 778h210M388 789h89M388 805h40M397 817h205M388 827h79M397 838h207M388 848h214M388 859h147M388 875h40M397 887h133M397 898h215M388 909h108M388 926h40M397 937h212M388 947h218M388 957h223M388 967h46M397 979h215M388 989h78M397 999h212M388 1010h165M388 1027h40M397 1038h218M388 1047h51M397 1059h172" stroke="#000" stroke-width="8"/>
          </svg>
          <span class="num2">2-3</span>
        </div>
      </div>
    </section>
  </main>
</div>

<svg class="arrows" width="1460" height="480" viewBox="0 0 1460 480" aria-hidden="true"><path d="M651 184L892 440M646 180l786 278" stroke="#fb2d1b" stroke-width="4" fill="none"/><path d="M904 453l-21-8 14-13zM1447 464l-22 3 7-19z" fill="#fb2d1b"/></svg>
<script src="marks.js"></script>
</body>
</html>
```
FILE: marks.js
```js
// Shows the hidden characters of the story: spaces, paragraph ends and soft hyphens.
for (const frame of document.querySelectorAll('.frame')) {
  const walker = document.createTreeWalker(frame, NodeFilter.SHOW_TEXT);
  const nodes = [];
  while (walker.nextNode()) {
    if (walker.currentNode.parentElement.closest('h2, h3, p, .blank')) nodes.push(walker.currentNode);
  }
  for (const node of nodes) {
    const holder = document.createElement('template');
    holder.innerHTML = node.data
      .replace(/-\n/g, '\u0001')
      .replace(/\n/g, ' \n')
      .replace(/ /g, '<i> </i>')
      .replace(/[¶#]/g, '<b>$&</b>')
      .replace(/\u0001/g, '<u>-</u>\n');
    node.replaceWith(holder.content);
  }
}
```
FILE: styles.css
```css
* { box-sizing: border-box; }
html, body { height: 100%; margin: 0; }
body { display: flex; flex-direction: column; background: #2b2b2d; color: #f2f2f2; font: 11px/14px "Open Sans", sans-serif; overflow: hidden; position: relative; }
button, input, select { font: inherit; color: inherit; background: none; border: 0; padding: 0; margin: 0; border-radius: 0; min-width: 0; }
select { appearance: none; }
ul, ol, h1, h2, h3, p { margin: 0; padding: 0; list-style: none; font-size: inherit; font-weight: inherit; }
svg { flex: none; display: block; }
.sprite { position: absolute; width: 0; height: 0; }
.grow { flex: 1; }
.c8 { width: 8px; height: 8px; color: #ddd; }
.dim { color: #8a8a8a; }
.up { transform: rotate(180deg); }

.menubar { flex: none; height: 22px; background: #212123; display: flex; align-items: center; gap: 17px; padding-left: 19px; font: 14px/20px Inter, sans-serif; color: #fff; }
.apple { width: 17px; height: 17px; margin-right: 1px; }
.menubar .appname { font-weight: 700; margin-right: 3px; }

.app { flex: 1; min-height: 0; margin: 0 2px; display: flex; flex-direction: column; background: #535353; border-radius: 6px 6px 0 0; border-top: 1px solid #3c3c3c; overflow: hidden; }
.appbar { flex: none; height: 33px; display: flex; align-items: center; border-bottom: 1px solid #3a3a3a; padding: 0 13px 0 8px; }
.lights { display: flex; gap: 8px; margin-right: 21px; }
.lights i { width: 12px; height: 12px; border-radius: 50%; }
.red { background: #fc5b57; }
.amber { background: #fdbc40; }
.go { background: #34c84a; }
.chip { width: 16px; height: 16px; background: #bababa; color: #535353; font-weight: 600; line-height: 16px; margin-right: 20px; }
.pick { display: flex; align-items: center; }
.pick select { flex: 1; }
.zoom { width: 68px; font-size: 13px; margin: 0 10px 0 -3px; color: #fff; }
.vline { width: 1px; height: 22px; background: #464646; margin-right: 10px; }
.tool2 { display: flex; align-items: center; gap: 9px; margin-right: 14px; }
.appbar h1 { flex: 1; text-align: center; font-size: 13px; padding-right: 5px; }
.publish { height: 26px; width: 122px; border: 1px solid #f5f5f5; border-radius: 13px; display: flex; align-items: center; justify-content: center; gap: 6px; font-size: 12px; color: #fff; margin-right: 6px; }
.space { width: 112px; font-size: 13px; font-weight: 600; margin-right: 14px; }
.appbar .space + .vline { margin-right: 6px; }
.search { width: 130px; height: 21px; background: #454545; border: 1px solid #6e6e6e; border-radius: 2px; display: flex; align-items: center; gap: 4px; padding-left: 3px; }
.search input { width: 90px; }
.search input::placeholder { color: #8c8c8c; opacity: 1; }

.control { flex: none; height: 61px; display: flex; align-items: center; border-bottom: 1px solid #3a3a3a; padding: 0 6px 0 4px; }
.sep { width: 1px; height: 47px; background: #484848; flex: none; }
.refpt { margin: 0 12px 0 20px; }
.coords { display: grid; grid-template-columns: 13px 87px 26px 87px; gap: 5px 0; align-items: center; font-weight: 600; }
.coords label:nth-of-type(even) { padding-left: 12px; }
.field { display: flex; align-items: center; width: 87px; height: 21px; border-radius: 2px; font-weight: 400; }
.field input { flex: 1; width: 20px; align-self: stretch; padding-left: 6px; }
.field .st { width: 8px; height: 16px; margin: 0 4px; color: #bdbdbd; }
.field > .c8 { margin-right: 6px; }
.off { background: #5d5d5d; color: #949494; }
.on.field { background: #454545; border: 1px solid #707070; }
.field .bl { border-left: 1px solid #707070; padding-left: 4px; }
.dd { width: 18px; align-self: stretch; border-left: 1px solid #707070; display: flex; align-items: center; justify-content: center; }
.unlink { margin: 0 11px 0 11px; }
.scale { display: grid; grid-template-columns: 14px 87px; gap: 5px; align-items: center; margin: 0 6px 0 7px; }
.linkbtn { width: 22px; height: 22px; background: #2f2f2f; border-radius: 3px; display: grid; place-items: center; }
.icons { display: grid; gap: 8px 11px; }
.rot { grid-template-columns: 16px 16px; margin: 0 12px 0 8px; }
.rot svg { width: 16px; height: 18px; }
.bigp { width: 25px; height: 25px; margin-right: 7px; font: 22px/26px "Liberation Serif", serif; color: #8f8f8f; text-align: center; background: linear-gradient(#999, #999) 0 0/4px 1px, linear-gradient(#999, #999) 0 0/1px 4px, linear-gradient(#999, #999) 100% 0/4px 1px, linear-gradient(#999, #999) 100% 0/1px 4px, linear-gradient(#999, #999) 0 100%/4px 1px, linear-gradient(#999, #999) 0 100%/1px 4px, linear-gradient(#999, #999) 100% 100%/4px 1px, linear-gradient(#999, #999) 100% 100%/1px 4px; background-repeat: no-repeat; }
.hier { grid-template-columns: 14px 19px; gap: 8px 11px; margin: 0 7px 0 10px; }
.hier svg { width: 100%; height: 18px; }
.flip { transform: scaleY(-1); }
.fills { display: grid; grid-template-columns: 21px 17px; gap: 5px 3px; margin: 0 5px; }
.sw { width: 21px; height: 21px; border: 1px solid #444; }
.box { border: 1px solid #707070; border-radius: 2px; background: #454545; display: grid; place-items: center; }
.stack { display: grid; gap: 5px; margin: 0 5px; }
.stroke { flex: 1; align-self: stretch; background: #000; border: solid #e0e0e0; border-width: 5px 9px 5px 4px; }
.effects { margin-left: 8px; }
.row3, .row2 { display: flex; align-items: center; height: 21px; }
.row3 { gap: 14px; }
.fx { font: italic 16px/20px "Liberation Serif", serif; color: #ccc; }
.row2 { gap: 6px; }
.row2 .field { width: 70px; }
.row2 .field input { padding-left: 4px; }
.wraps { display: grid; grid-template-columns: 22px 22px; gap: 4px 5px; margin: 0 6px; }
.wraps button { height: 22px; border-radius: 3px; display: grid; place-items: center; }
.wraps svg { width: 14px; height: 14px; }
.wraps .active { background: #2f2f2f; }
.corners { grid-template-columns: 15px 87px; gap: 5px 4px; margin-right: 5px; }
.cshape { flex: 1; align-self: stretch; background: #e0e0e0; position: relative; }
.cshape::after { content: ""; position: absolute; inset: 2px 8px 2px 1px; border: solid #000; border-width: 2px 2px 0 0; }
.objstyle { display: grid; grid-template-columns: 16px 182px; gap: 5px 11px; align-items: center; margin: 0 5px 0 13px; }
.light { height: 21px; background: #e2e2e2; color: #1e1e1e; border: 1px solid #707070; }
.light select { padding-left: 7px; }
.light .dd { background: #454545; }
.mini { display: flex; justify-content: flex-end; align-items: center; gap: 9px; height: 21px; padding-right: 4px; }
.bolt { color: #ccc; margin-right: 10px; }
.far { margin: 0 0 0 8px; gap: 16px; }

.work { flex: 1; min-height: 0; display: flex; }
.strip { flex: none; height: 12px; background: #434343; border-bottom: 1px solid #3a3a3a; display: flex; align-items: center; padding-left: 6px; color: #c0c0c0; }
.dbl { width: 7px; height: 6px; }
.toolcol, .dock, .icondock { flex: none; display: flex; flex-direction: column; }
.toolcol { width: 39px; border-right: 1px solid #3a3a3a; }
.tools { flex: 1; display: flex; flex-direction: column; align-items: center; }
.grip { width: 20px; height: 4px; margin: 4px auto 6px; }
.tools > button { flex: none; width: 28px; height: 22px; margin: 1px 0; border-radius: 3px; display: grid; place-items: center; position: relative; }
.tools button > svg { width: 18px; height: 18px; }
.tools .on { background: #2f2f2f; }
.tools button > .cn { position: absolute; right: 2px; bottom: 2px; width: 3px; height: 3px; }
.tools hr { width: 35px; height: 1px; margin: 1px 0; border: 0; background: #474747; flex: none; }
.grad { width: 16px; height: 14px; border: 1px solid #ccc; background: linear-gradient(90deg, #b5b5b5, #505050); }
.feather { background: linear-gradient(#5559, #bbb), repeating-conic-gradient(#444 0 25%, #999 0 50%) 0 0/6px 6px; }
.fillstroke { width: 38px; height: 52px; }
.fmt { display: flex; gap: 2px; height: 12px; margin: 5px 0 5px; }
.tools .fmt button { width: 14px; height: 12px; border-radius: 2px; display: grid; place-items: center; font: bold 12px/12px "Liberation Serif", serif; color: #ccc; }
.tools .fmt svg { width: 8px; height: 8px; }
.tools > .gap { margin: 2px 0 5px; }
.tools button > .nn { width: 16px; height: 14px; }

.dock { width: 370px; border: solid #3a3a3a; border-width: 0 1px; }
.panels { flex: 1; min-height: 0; display: grid; grid-template-rows: 652fr 321fr 192fr; }
.panel { min-height: 0; display: flex; flex-direction: column; border: 1px solid #3a3a3a; border-width: 1px 1px 0 1px; box-shadow: inset 0 -1px #3a3a3a; overflow: hidden; }
.tabs { flex: none; height: 26px; display: flex; background: #434343; font-weight: 700; }
.tabs button { border: solid #383838; border-width: 0 1px 1px 0; color: #a9a9a9; padding: 0 12px; display: flex; align-items: center; white-space: nowrap; overflow: hidden; }
.tabs .cur { background: #535353; color: #f4f4f4; border-bottom-color: #535353; padding: 0 12px 0 8px; gap: 4px; }
.ud { width: 6px; height: 10px; color: #bbb; }
.tabs > .grow { border-bottom: 1px solid #383838; }
.bg { width: 10px; height: 8px; margin: 9px 6px 0 0; color: #bbb; }
.even button { width: 69px; padding-right: 0; }
.even .cur { width: 67px; }
.even .info { width: 45px; }
.head { flex: none; height: 24px; display: flex; align-items: center; padding: 0 10px 0 5px; color: #fff; font-size: 10px; font-weight: 600; }
.pb { width: 13px; height: 12px; margin-right: 17px; color: #ccc; }
.bt { width: 10px; height: 14px; color: #ccc; }
.list { flex: 1; min-height: 0; overflow: hidden; border: solid #5f5f5f; border-width: 1px 0; margin: 0 1px; color: #fff; }
.list li { height: 22px; border-bottom: 1px solid #5f5f5f; display: flex; align-items: center; white-space: nowrap; }
.list .l1 { padding-left: 34px; }
.list .l2 { padding-left: 49px; }
.set { padding-left: 3px; }
.set .fo { margin: 0 3px 0 6px; }
.fo { width: 14px; height: 11px; color: #c6c6c6; }
.list .sel { background: #526a82; font-weight: 600; }
.files .sel { font-weight: 400; }
.nopen { width: 12px; height: 12px; margin-right: 10px; }
.foot { flex: none; height: 28px; display: flex; align-items: center; gap: 14px; padding: 0 24px 0 4px; color: #c6c6c6; }
.cl { width: 18px; height: 12px; }
.clr { width: 17px; display: flex; align-items: center; justify-content: space-between; color: #8a8a8a; font: bold 14px/14px "Liberation Serif", serif; }
.ni { width: 10px; height: 11px; }
.fo + .ni { margin-left: 3px; }
.tr { width: 11px; height: 13px; margin-left: 3px; }
.foot .dim { color: #868686; }
.scroller { flex: 1; min-height: 0; display: flex; }
.files { margin-right: 0; border-bottom: 0; }
.files li { padding-left: 45px; gap: 6px; }
.list .dir { padding-left: 8px; gap: 0; }
.dir .fo { margin: 0 6px 0 29px; }
.sc { width: 14px; height: 13px; color: #c6c6c6; }
.bar { width: 13px; background: #4a4a4a; padding: 3px 2px; border-left: 1px solid #444; }
.bar .c8, .vscroll .c8 { color: #888; }

.icondock { width: 40px; border-right: 1px solid #3a3a3a; }
.icondock .strip { padding-left: 7px; }
.iconset { height: 154px; border-bottom: 1px solid #3a3a3a; display: flex; flex-direction: column; align-items: center; padding-left: 1px; }
.iconset .grip { margin-bottom: 3px; }
.iconset button { width: 28px; height: 24px; margin-bottom: 4px; border-radius: 3px; display: grid; place-items: center; border: 1px solid transparent; }
.iconset button svg { width: 18px; height: 18px; }
.iconset .on { background: #3a3a3a; border-color: #747474; }

.doc { flex: 1; min-width: 0; display: grid; grid-template: 29px 16px 1fr / 1fr 15px; position: relative; background: #5d5d5d; overflow: hidden; }
.doctabs { grid-column: 1 / 3; background: #434343; }
.doctabs i { display: block; width: 158px; height: 8px; background: #535353; border-right: 1px solid #383838; }
.ruler { background: #1d1d1d; border-bottom: 1px solid #8c8c8c; display: flex; padding-left: 244px; overflow: hidden; color: #ddd; font: 10px/11px "Open Sans", sans-serif; }
.ruler li { flex: none; width: 43px; padding-left: 3px; border-left: 1px solid #aaa; background: linear-gradient(#999, #999) 21px 100%/1px 4px no-repeat, repeating-linear-gradient(90deg, transparent 0 3px, #888 3px 4px) 0 100%/100% 2px no-repeat; }
.pasteboard { min-height: 0; overflow: hidden; padding: 267px 0 0 164px; background: linear-gradient(#7a7a7a, #7a7a7a) 0 102px/100% 1px no-repeat, linear-gradient(#7a7a7a, #7a7a7a) 0 157px/100% 1px no-repeat; }
.spread { display: flex; width: 1107px; height: 850px; background: #fff; box-shadow: 2px 2px #000, 0 0 0 1px #333; }
.page { width: 554px; padding: 53px 54px 54px 53px; color: #000; font: 15px/20px "Liberation Serif", serif; }
.page.left { border-right: 1px solid #222; }
.frame { position: relative; height: 742px; width: 446px; border: solid #9a3cf5; border-width: 1px; border-top-color: #ff50f5; border-bottom-color: #ff50f5; }
.left .frame::after { content: ""; position: absolute; left: 0; right: 0; bottom: 13px; height: 1px; background: #4b8fe8; }
.frame h2 { height: 18px; font: bold 19px/18px "Liberation Serif", serif; text-align: center; white-space: pre; }
.ch2 { color: #1fabe9; }
.ch3 { color: #43ab4b; }
.frame h3 { font-weight: 700; font-size: 17px; white-space: pre; }
.frame p { white-space: pre; text-indent: 17px; }
.end { display: block; text-indent: 0; }
.end, .frame .single { padding-top: 2px; }
.frame section { margin-top: 14px; }
.frame h2 + section, .blank + section { margin-top: 16px; }
.blank { height: 18px; margin-top: 11px; line-height: 18px; }
.frame i { background: radial-gradient(circle at center, #5b9bf5 0 1px, transparent 1px) center 60%/3px 3px no-repeat; font-style: normal; }
.frame b { color: #5299fb; font-size: 15px; line-height: 1; }
.frame u { text-decoration: none; position: relative; }
.frame u::after { content: "~"; position: absolute; left: -3px; top: -4px; line-height: 14px; color: #5299fb; font-size: 14px; text-indent: 0; }
.vscroll { grid-column: 2; grid-row: 2 / 4; background: #4a4a4a; padding: 4px 3px 0; border-left: 1px solid #444; display: grid; grid-template-rows: 1fr 580px; }
.vscroll i { background: #6a6a6a; border-radius: 6px 6px 0 0; margin: 0 -2px; }

.flyout { position: absolute; left: 0; top: 7px; bottom: 0; width: 241px; background: #535353; border: solid #383838; border-width: 4px 2px 0 0; box-shadow: 1px 0 5px #0006; display: flex; flex-direction: column; }
.pg button { width: 28px; padding-right: 0; }
.pg .cur { width: 63px; }
.pg .bg { margin: 10px 5px 0 0; }
.dblb { width: 10px; height: 9px; margin: 9px 7px 0 0; color: #ddd; }
.vb { width: 1px; height: 12px; background: #999; margin: 8px 7px 0 0; }
.masters { flex: none; height: 506px; padding: 5px 23px 0 3px; border-bottom: 1px solid #616161; color: #f0f0f0; }
.masters li { display: flex; justify-content: space-between; height: 55px; margin-bottom: 6px; line-height: 18px; }
.th { display: flex; height: 54px; background: #fff; border: 1px solid #808080; }
.th i { width: 34px; background: linear-gradient(var(--c, #fff), var(--c, #fff)) center 0/16px 1px no-repeat; }
.th i + i { border-left: 1px solid #808080; width: 35px; }
.pink { --c: #e07ab8; }
.blue { --c: #7fc9f5; }
.lime { --c: #6cb96c; }
.size { flex: none; height: 33px; display: flex; align-items: center; border-bottom: 1px solid #474747; padding: 0 17px 0 4px; color: #fff; font-weight: 600; }
.size .pick { flex: 1; }
.size select { text-align: center; text-align-last: center; }
.size .vb { height: 24px; margin: 0 0 0 6px; background: #777; }
.spreads { display: flex; flex-direction: column; padding: 2px 0 0 16px; }
.tt { font: bold 16px "Liberation Serif", serif; fill: #10335f; text-anchor: middle; }
.num { width: 11px; height: 14px; background: #2d8ceb; text-align: center; font-weight: 400; margin: 0 0 3px 134px; }
.num2 { width: 186px; text-align: center; }

.arrows { position: absolute; left: 0; top: 0; pointer-events: none; }
```
